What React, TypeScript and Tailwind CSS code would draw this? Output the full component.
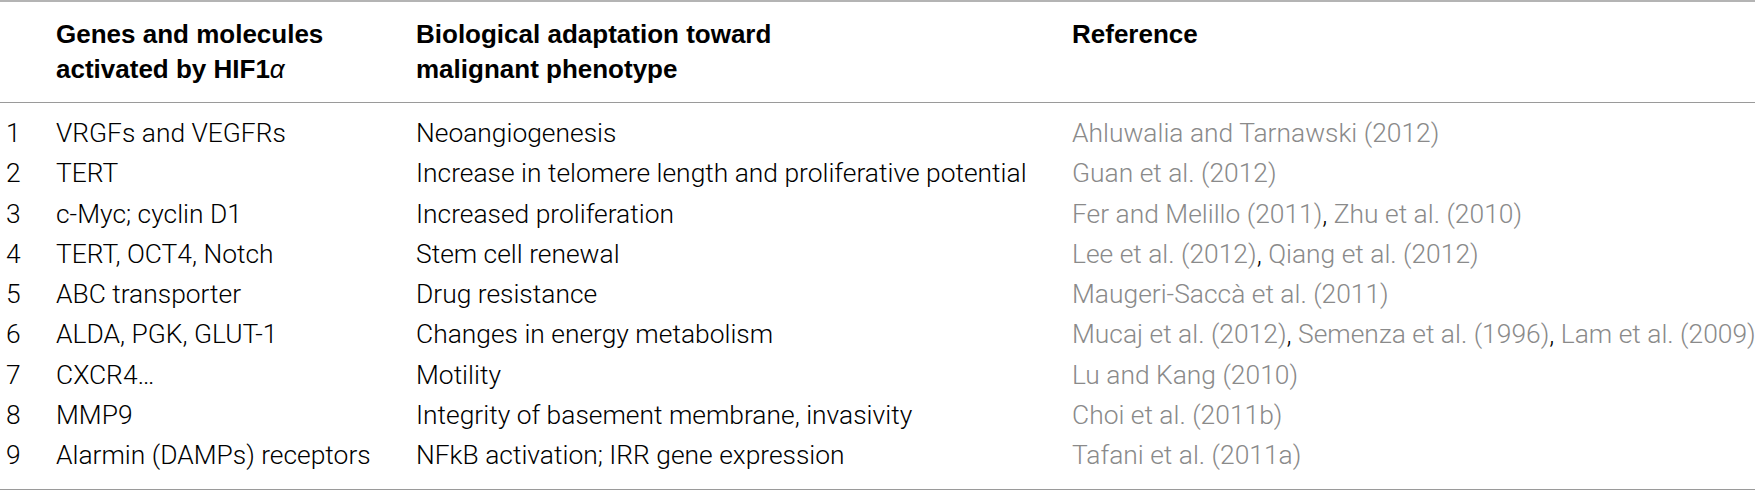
const rows = [
  { n: '1', genes: 'VRGFs and VEGFRs', effect: 'Neoangiogenesis', refs: ['Ahluwalia and Tarnawski (2012)'] },
  { n: '2', genes: 'TERT', effect: 'Increase in telomere length and proliferative potential', refs: ['Guan et al. (2012)'] },
  { n: '3', genes: 'c-Myc; cyclin D1', effect: 'Increased proliferation', refs: ['Fer and Melillo (2011)', 'Zhu et al. (2010)'] },
  { n: '4', genes: 'TERT, OCT4, Notch', effect: 'Stem cell renewal', refs: ['Lee et al. (2012)', 'Qiang et al. (2012)'] },
  { n: '5', genes: 'ABC transporter', effect: 'Drug resistance', refs: ['Maugeri-Saccà et al. (2011)'] },
  { n: '6', genes: 'ALDA, PGK, GLUT-1', effect: 'Changes in energy metabolism', refs: ['Mucaj et al. (2012)', 'Semenza et al. (1996)', 'Lam et al. (2009)'] },
  { n: '7', genes: 'CXCR4…', effect: 'Motility', refs: ['Lu and Kang (2010)'] },
  { n: '8', genes: 'MMP9', effect: 'Integrity of basement membrane, invasivity', refs: ['Choi et al. (2011b)'] },
  { n: '9', genes: 'Alarmin (DAMPs) receptors', effect: 'NFkB activation; IRR gene expression', refs: ['Tafani et al. (2011a)'] },
]

export default function App() {
  return (
    <div className="h-[490px] w-[1755px] overflow-hidden bg-white font-['Roboto',sans-serif] text-[26.4px] text-black">
      <table className="w-full table-fixed border-collapse">
        <colgroup>
          <col className="w-[56px]" />
          <col className="w-[360px]" />
          <col className="w-[656px]" />
          <col />
        </colgroup>
        <thead className="font-['Liberation_Sans',Arial,sans-serif] text-[26px]">
          <tr className="border-t-2 border-b border-t-[#b4b4b4] border-b-[#9a9a9a]">
            <th />
            <th className="py-[15px] text-left align-top font-bold leading-[35px]">
              Genes and molecules
              <br />
              activated by HIF1<span className="font-normal italic">α</span>
            </th>
            <th className="py-[15px] text-left align-top font-bold leading-[35px]">
              Biological adaptation toward
              <br />
              malignant phenotype
            </th>
            <th className="py-[15px] text-left align-top font-bold leading-[35px]">Reference</th>
          </tr>
        </thead>
        <tbody className="border-b border-b-[#9a9a9a]">
          {rows.map((row, i) => (
            <tr key={row.n} className="font-light leading-[40.3px]">
              <td className={`pl-[6px] ${i === 0 ? 'pt-[10px]' : ''} ${i === rows.length - 1 ? 'pb-[13px]' : ''}`}>{row.n}</td>
              <td className={`${i === 0 ? 'pt-[10px]' : ''} ${i === rows.length - 1 ? 'pb-[13px]' : ''}`}>{row.genes}</td>
              <td className={`${i === 0 ? 'pt-[10px]' : ''} ${i === rows.length - 1 ? 'pb-[13px]' : ''}`}>{row.effect}</td>
              <td className={`whitespace-nowrap ${i === 0 ? 'pt-[10px]' : ''} ${i === rows.length - 1 ? 'pb-[13px]' : ''}`}>
                {row.refs.map((r, j) => (
                  <span key={r}>
                    {j > 0 && <span className="text-black">, </span>}
                    <span className="text-[#8a8a8a]">{r}</span>
                  </span>
                ))}
              </td>
            </tr>
          ))}
        </tbody>
      </table>
    </div>
  )
}
